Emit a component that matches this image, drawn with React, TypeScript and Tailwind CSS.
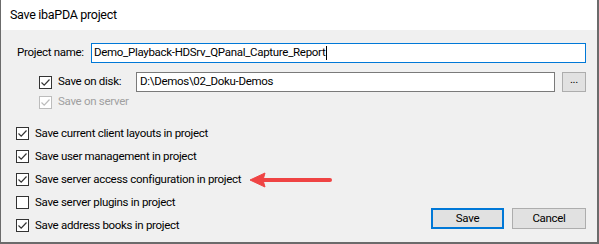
import React from 'react';

const font = { fontFamily: 'Roboto, "Liberation Sans", Arial, sans-serif' };

const Check = ({ checked, disabled }: { checked: boolean; disabled?: boolean }) => (
  <span
    className={`flex h-[13px] w-[13px] shrink-0 items-center justify-center border bg-white ${
      disabled ? 'border-[#bcbcbc] bg-[#f0f0f0]' : 'border-[#333333]'
    }`}
  >
    {checked && (
      <svg width="11" height="11" viewBox="0 0 11 11">
        <path
          d="M1.5 5.5 L4.2 8.2 L9.5 2.5"
          fill="none"
          stroke={disabled ? '#bcbcbc' : '#333333'}
          strokeWidth="1.2"
        />
      </svg>
    )}
  </span>
);

const Arrow = () => (
  <svg width="84" height="18" viewBox="0 0 84 18" className="ml-[8px]">
    <path d="M14 9 H81" stroke="#ef4444" strokeWidth="4" strokeLinecap="round" />
    <path d="M1 9 L16 2 L14 9 L16 16 Z" fill="#ef4444" stroke="#ef4444" strokeLinejoin="round" />
  </svg>
);

const options = [
  { label: 'Save current client layouts in project', checked: true },
  { label: 'Save user management in project', checked: true },
  { label: 'Save server access configuration in project', checked: true, arrow: true },
  { label: 'Save server plugins in project', checked: false },
  { label: 'Save address books in project', checked: true },
];

export default function App() {
  return (
    <div className="h-[244px] w-[599px] bg-white text-[11.5px] tracking-[-0.3px] text-black" style={font}>
      <div className="flex h-full flex-col border-b-2 border-l border-r-2 border-[#6b6b6b]">
        <div className="flex h-[30px] items-center bg-white pl-[9px] text-[12.5px]">Save ibaPDA project</div>
        <div className="flex flex-1 flex-col bg-[#f0f0f0] pl-[15px] pr-[11px] pt-[13px]">
          <div className="flex h-[20px] items-center">
            <span className="w-[75px] pl-px">Project name:</span>
            <div className="flex h-[20px] flex-1 items-center border border-[#0078d7] bg-white pl-[2px]">
              Demo_Playback-HDSrv_QPanal_Capture_Report
              <span className="ml-[1px] h-[14px] w-px bg-black" />
            </div>
          </div>
          <div className="mt-[9px] flex h-[20px] items-center pl-[23px]">
            <Check checked />
            <span className="ml-[6px] w-[78px]">Save on disk:</span>
            <div className="flex h-[20px] flex-1 items-center border border-[#7a7a7a] bg-white pl-[3px]">
              D:\Demos\02_Doku-Demos
            </div>
            <button className="ml-[7px] h-[20px] w-[24px] border border-[#adadad] bg-[#e1e1e1] pb-[4px] leading-none">
              ...
            </button>
          </div>
          <div className="mt-[4px] flex h-[12px] items-center pl-[23px] text-[#a0a0a0]">
            <Check checked disabled />
            <span className="ml-[6px]">Save on server</span>
          </div>
          <div className="mt-[14px] flex">
            <div className="flex flex-col">
              {options.map((o) => (
                <div key={o.label} className="flex h-[23px] items-center">
                  <Check checked={o.checked} />
                  <span className="ml-[6px]">{o.label}</span>
                  {o.arrow && <Arrow />}
                </div>
              ))}
            </div>
            <div className="ml-auto flex items-end gap-[8px] pb-[8px]">
              <button className="h-[21px] w-[73px] border-2 border-[#0078d7] bg-[#e1e1e1]">Save</button>
              <button className="h-[21px] w-[74px] border border-[#adadad] bg-[#e1e1e1]">Cancel</button>
            </div>
          </div>
        </div>
      </div>
    </div>
  );
}
